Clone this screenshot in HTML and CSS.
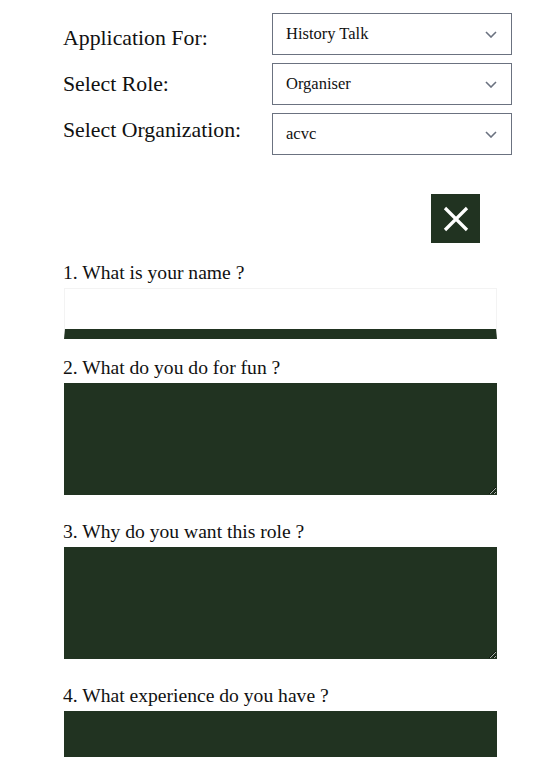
FILE: index.html
```html
<!DOCTYPE html>
<html>
<head>
<meta charset="utf-8">
<link rel="stylesheet" href="styles.css">
</head>
<body>
<div class="page">
  <div class="top">
    <div class="labels">
      <div class="top-label">Application For:</div>
      <div class="top-label">Select Role:</div>
      <div class="top-label">Select Organization:</div>
    </div>
    <div class="selects">
      <div class="select"><span>History Talk</span><svg class="chev" width="12" height="7" viewBox="0 0 12 7"><path d="M1 1l5 5 5-5" fill="none" stroke="#6b7280" stroke-width="1.6"/></svg></div>
      <div class="select"><span>Organiser</span><svg class="chev" width="12" height="7" viewBox="0 0 12 7"><path d="M1 1l5 5 5-5" fill="none" stroke="#6b7280" stroke-width="1.6"/></svg></div>
      <div class="select"><span>acvc</span><svg class="chev" width="12" height="7" viewBox="0 0 12 7"><path d="M1 1l5 5 5-5" fill="none" stroke="#6b7280" stroke-width="1.6"/></svg></div>
    </div>
  </div>
  <div class="close-row">
    <button class="close"><svg width="26" height="26" viewBox="0 0 26 26"><path d="M2 2L24 24M24 2L2 24" stroke="#fff" stroke-width="3.2" stroke-linecap="butt"/></svg></button>
  </div>
  <div class="questions">
    <div class="q">
      <label class="q-label">1. What is your name ?</label>
      <input class="q-input" type="text">
    </div>
    <div class="q">
      <label class="q-label">2. What do you do for fun ?</label>
      <textarea class="q-area"></textarea>
    </div>
    <div class="q">
      <label class="q-label">3. Why do you want this role ?</label>
      <textarea class="q-area"></textarea>
    </div>
    <div class="q">
      <label class="q-label">4. What experience do you have ?</label>
      <textarea class="q-area"></textarea>
    </div>
  </div>
</div>
</body>
</html>
```
FILE: styles.css
```css
* { box-sizing: border-box; }
html, body { margin: 0; padding: 0; background: #fff; }
body { font-family: "Liberation Serif", "Times New Roman", serif; color: #111; }
.page { padding-left: 63px; width: 549px; }
.top { display: flex; }
.labels { width: 209px; padding-top: 15px; display: flex; flex-direction: column; }
.top-label { font-size: 21.8px; line-height: 46px; height: 46px; white-space: nowrap; }
.selects { padding-top: 13px; display: flex; flex-direction: column; gap: 8px; }
.select {
  width: 240px; height: 42px; border: 1px solid #6b7280;
  display: flex; align-items: center; justify-content: space-between;
  padding: 0 14px 0 13px; font-size: 16.5px; color: #111;
}
.chev { display: block; }
.close-row { display: flex; justify-content: flex-end; width: 433px; padding-right: 16px; margin-top: 39px; }
.close {
  width: 49px; height: 49px; background: #213321; border: none; padding: 0;
  display: flex; align-items: center; justify-content: center; cursor: pointer;
}
.questions { margin-top: 18px; width: 434px; padding-left: 1px; }
.q { display: flex; flex-direction: column; }
.q + .q { margin-top: 25px; }
.q:nth-child(2) { margin-top: 17px; }
.q-label { font-size: 19.6px; line-height: 24px; margin-bottom: 3px; margin-left: -1px; white-space: nowrap; }
.q-input {
  width: 433px; height: 51px; border: 1px solid #f3f3f3; border-bottom: 10px solid #213321;
  background: #fff; margin: 0; padding: 0 8px; font-family: inherit; font-size: 16px; outline: none;
}
.q-area {
  width: 433px; height: 112px; border: none; background: #213321; margin: 0; padding: 8px;
  display: block; font-family: inherit; font-size: 16px; color: #fff; resize: vertical; outline: none;
}
```
